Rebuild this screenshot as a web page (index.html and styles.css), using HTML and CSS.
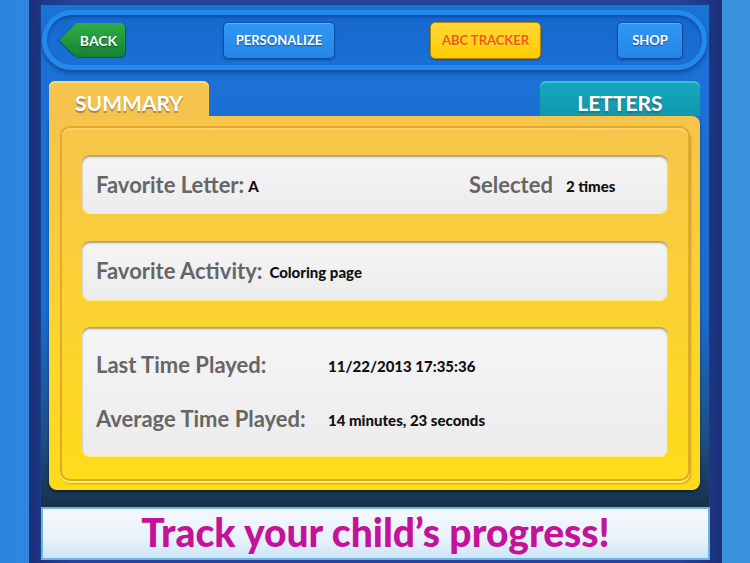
FILE: index.html
```html
<!DOCTYPE html>
<html lang="en">
<head>
    <meta charset="UTF-8">
    <meta name="viewport" content="width=device-width, initial-scale=1.0">
    <title>ABC Tracker</title>
    <link rel="stylesheet" href="styles.css">
</head>
<body>
    <div class="device">
        <div class="screen">
            <nav class="topbar">
                <button class="btn btn-back">BACK</button>
                <button class="btn btn-blue btn-personalize">PERSONALIZE</button>
                <button class="btn btn-yellow btn-tracker">ABC TRACKER</button>
                <button class="btn btn-blue btn-shop">SHOP</button>
            </nav>

            <div class="tabs">
                <div class="tab tab-summary">SUMMARY</div>
                <div class="tab tab-letters">LETTERS</div>
            </div>

            <div class="board">
                <div class="board-inner">
                    <div class="stat-row row-letter">
                        <div class="pair">
                            <span class="label">Favorite Letter:</span>
                            <span class="value">A</span>
                        </div>
                        <div class="pair pair-selected">
                            <span class="label">Selected</span>
                            <span class="value">2 times</span>
                        </div>
                    </div>

                    <div class="stat-row">
                        <div class="pair pair-activity">
                            <span class="label">Favorite Activity:</span>
                            <span class="value">Coloring page</span>
                        </div>
                    </div>

                    <div class="stat-row row-times">
                        <span class="label">Last Time Played:</span>
                        <span class="value">11/22/2013 17:35:36</span>
                        <span class="label">Average Time Played:</span>
                        <span class="value">14 minutes, 23 seconds</span>
                    </div>
                </div>
            </div>

            <div class="banner">Track your child’s progress!</div>
        </div>
    </div>
</body>
</html>
```

FILE: styles.css
```css
:root {
    --board-top: #f6c44c;
    --board-bottom: #ffdc18;
    --label-gray: #666666;
    --magenta: #c4129a;
}

* {
    box-sizing: border-box;
}

body {
    margin: 0;
    height: 563px;
    overflow: hidden;
    background: linear-gradient(90deg, #2b84dc 0, #2e88de 29px, #3a92dc 722px, #3a92dc 100%);
    font-family: 'Lato', 'Open Sans', sans-serif;
}

/* dark bezel round the app screen */
.device {
    margin-left: 29px;
    width: 693px;
    height: 563px;
    padding: 4px 12px 3px 11px;
    background: linear-gradient(90deg, #1a2f78, #23449a 6%, #23449a 94%, #1a2f78);
}

.screen {
    width: 670px;
    height: 556px;
    display: flex;
    flex-direction: column;
    background: linear-gradient(180deg, #1b72d6 0%, #1a6cd0 55%, #1c4f88 78%, #19324c 90%, #172c44 100%);
    box-shadow: inset 0 0 0 1px #163f8a;
}

/* top navigation pill */
.topbar {
    margin: 6px 3px 0 2px;
    height: 60px;
    border-radius: 30px;
    border: 5px solid #2489ec;
    background: linear-gradient(180deg, #1668cc, #1a70d6);
    box-shadow: 0 3px 4px rgba(10, 40, 100, 0.5), inset 0 2px 3px rgba(0, 40, 110, 0.45);
    display: flex;
    align-items: center;
}

.btn {
    font-family: 'Lato', sans-serif;
    font-weight: 700;
    font-size: 13px;
    height: 37px;
    padding: 0;
    border-radius: 5px;
    color: #ffffff;
    text-shadow: 0 1px 1px rgba(0, 0, 0, 0.45);
    cursor: pointer;
}

.btn-blue {
    background: linear-gradient(180deg, #3097f4, #2485e6);
    border: 1px solid #0f4f9e;
    box-shadow: inset 0 1px 0 rgba(255, 255, 255, 0.25), 0 1px 2px rgba(0, 30, 80, 0.4);
}

.btn-yellow {
    background: linear-gradient(180deg, #ffd83a, #ffcc00);
    border: 1px solid #b78400;
    color: #f05a12;
    text-shadow: 0 1px 0 rgba(255, 240, 150, 0.6);
    box-shadow: 0 1px 2px rgba(0, 30, 80, 0.4);
}

.btn-back {
    position: relative;
    z-index: 0;
    margin-left: 29px;
    width: 49px;
    height: 34px;
    padding-right: 4px;
    border: none;
    border-radius: 0 5px 5px 0;
    background: linear-gradient(180deg, #2fae45, #168232);
    box-shadow: 1px 1px 1px rgba(0, 40, 20, 0.5);
    font-size: 14px;
}

/* arrow point on the left of the back button */
.btn-back::before {
    content: '';
    position: absolute;
    left: -12px;
    top: 5px;
    width: 24px;
    height: 24px;
    border-radius: 3px;
    transform: rotate(45deg);
    background: linear-gradient(135deg, #2fae45, #168232);
    box-shadow: 0 1px 1px rgba(0, 40, 20, 0.5);
    z-index: -1;
}

.btn-personalize {
    margin-left: 98px;
    width: 112px;
}

.btn-tracker {
    margin-left: 95px;
    width: 111px;
}

.btn-shop {
    margin-left: 76px;
    width: 66px;
}

/* tabs above the summary board */
.tabs {
    margin-top: 11px;
    height: 35px;
    padding: 0 10px 0 9px;
    display: flex;
    justify-content: space-between;
}

.tab {
    width: 160px;
    border-radius: 6px 6px 0 0;
    text-align: center;
    font-weight: 700;
    font-size: 21px;
    line-height: 44px;
    color: #ffffff;
    text-shadow: 0 2px 1px rgba(90, 80, 60, 0.55);
}

.tab-summary {
    background: var(--board-top);
    box-shadow: inset 0 2px 0 #ffd872;
}

.tab-letters {
    background: linear-gradient(180deg, #16a8bd, #0f98ae);
    box-shadow: inset 0 2px 0 #3cc0d0;
}

/* yellow board */
.board {
    margin: 0 10px 0 9px;
    height: 374px;
    padding: 10px 10px 9px 11px;
    border-radius: 0 8px 8px 8px;
    background: linear-gradient(180deg, var(--board-top), #fbd233 50%, var(--board-bottom));
    box-shadow: 0 2px 3px rgba(0, 0, 0, 0.45);
}

.board-inner {
    height: 100%;
    padding: 27px 20px 23px 20px;
    border-radius: 10px;
    border: 2px solid #e2a92a;
    box-shadow: inset 0 2px 0 #fcd66a, 0 2px 0 #fff06a, 1px 3px 2px rgba(150, 110, 0, 0.5);
    display: flex;
    flex-direction: column;
    gap: 28px;
}

.stat-row {
    height: 58px;
    padding: 0 14px;
    border-radius: 8px;
    background: linear-gradient(180deg, #f5f5f5, #ececec);
    box-shadow: inset 0 2px 2px rgba(110, 80, 10, 0.55), 0 1px 0 #fff27a;
    display: flex;
    align-items: center;
    justify-content: space-between;
}

.stat-row + .stat-row {
    height: 59px;
}

.label {
    font-weight: 700;
    font-size: 22px;
    color: var(--label-gray);
}

.value {
    font-weight: 900;
    font-size: 15px;
    color: #111111;
    padding-top: 3px;
}

.pair {
    display: flex;
    align-items: center;
    gap: 4px;
}

.pair-activity {
    gap: 7px;
}

.pair-selected {
    width: 185px;
    gap: 13px;
}

.stat-row.row-times {
    margin-top: -1px;
    height: 129px;
    display: grid;
    grid-template-columns: 232px 1fr;
    align-content: center;
    row-gap: 27px;
}

/* promo strip along the bottom */
.banner {
    margin: 17px 0 0 1px;
    height: 53px;
    border: 2px solid #6fb2e0;
    background: linear-gradient(180deg, #f4f8fb, #e8f3fa 60%, #cbe6f6);
    text-align: center;
    font-weight: 900;
    font-size: 39px;
    line-height: 47px;
    color: var(--magenta);
}
```
